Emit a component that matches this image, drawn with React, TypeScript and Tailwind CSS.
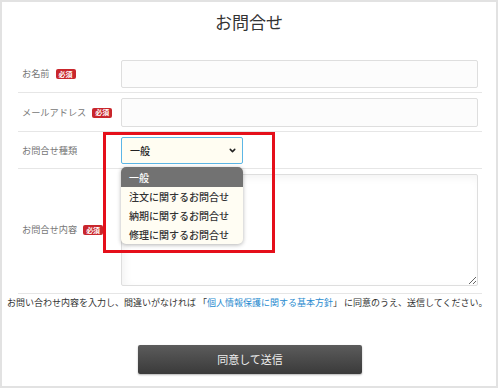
import { ChevronDown } from 'lucide-react';

function Badge() {
  return (
    <span className="flex h-[10px] w-[20px] items-center justify-center rounded-[2px] bg-[#c9262c] text-[7px] font-bold leading-none text-white">
      必須
    </span>
  );
}

function Row({
  label,
  required,
  children,
  last,
}: {
  label: string;
  required?: boolean;
  children: React.ReactNode;
  last?: boolean;
}) {
  return (
    <div className={`flex border-b border-[#e6e6e6] ${last ? 'pb-[7px]' : 'pb-[4px]'} pt-[5px]`}>
      <div className="flex w-[103px] items-center gap-[6px] pl-[4px] text-[9.2px] text-[#777]">
        <span>{label}</span>
        {required && <Badge />}
      </div>
      <div className="flex-1 pr-[4px]">{children}</div>
    </div>
  );
}

const options = ['注文に関するお問合せ', '納期に関するお問合せ', '修理に関するお問合せ'];

export default function App() {
  return (
    <div className="relative h-[389px] w-[500px] overflow-hidden bg-white font-['Noto_Sans_CJK_JP','Noto_Sans',sans-serif]">
      <div className="h-[388px] w-[498px] border-2 border-[#e2e2e2]">
        <div className="h-[53px] pt-[8px] text-center text-[17px] leading-[24px] text-[#333]">
          お問合せ
        </div>

        <div className="ml-[16px] w-[464px]">
          <Row label="お名前" required>
            <input className="block h-[28px] w-full rounded-[2px] border-[1.5px] border-[#dedede] bg-[#fcfcfc] outline-none" />
          </Row>
          <Row label="メールアドレス" required>
            <input className="block h-[29px] w-full rounded-[2px] border-[1.5px] border-[#dedede] bg-[#fcfcfc] outline-none" />
          </Row>
          <Row label="お問合せ種類">
            <div className="flex h-[27px] w-[122px] items-center justify-between rounded-[2px] border-[1.5px] border-[#5cb6e6] bg-[#fffdf2] pl-[8px] pr-[5px] text-[10px] font-medium text-[#222]">
              <span>一般</span>
              <ChevronDown size={9} strokeWidth={4} className="text-[#222]" />
            </div>
          </Row>
          <Row label="お問合せ内容" required last>
            <textarea
              readOnly
              className="block h-[112px] w-full resize-y rounded-[2px] border-[1.5px] border-[#dedede] bg-white shadow-[inset_3px_3px_8px_rgba(0,0,0,0.05)] outline-none"
            />
          </Row>
        </div>

        <p className="mt-[3px] whitespace-nowrap pl-[5px] text-[9px] leading-[12px] text-[#333]">
          お問い合わせ内容を入力し、間違いがなければ 「
          <span className="text-[#2a8cd0]">個人情報保護に関する基本方針</span>」 に同意のうえ、送信してください。
        </p>

        <button className="mt-[36px] ml-[136px] flex h-[29px] w-[224px] items-center justify-center rounded-[2px] bg-gradient-to-b from-[#5c5c5c] to-[#3a3a3a] text-[11px] text-[#eee] shadow-[0_1px_2px_rgba(0,0,0,0.3)]">
          同意して送信
        </button>
      </div>

      <div className="absolute left-[121px] top-[167px] w-[122px] overflow-hidden rounded-[5px] bg-[#fffdf3] text-[10px] font-medium text-[#333] shadow-[0_1px_4px_rgba(0,0,0,0.3)]">
        <div className="flex h-[20px] items-center bg-[#727272] pl-[8px] text-white">一般</div>
        {options.map((o) => (
          <div key={o} className="flex h-[19px] items-center pl-[8px]">
            {o}
          </div>
        ))}
      </div>

      <div className="absolute left-[103px] top-[132px] h-[121px] w-[172px] border-[3px] border-[#e50f1a]" />
    </div>
  );
}
